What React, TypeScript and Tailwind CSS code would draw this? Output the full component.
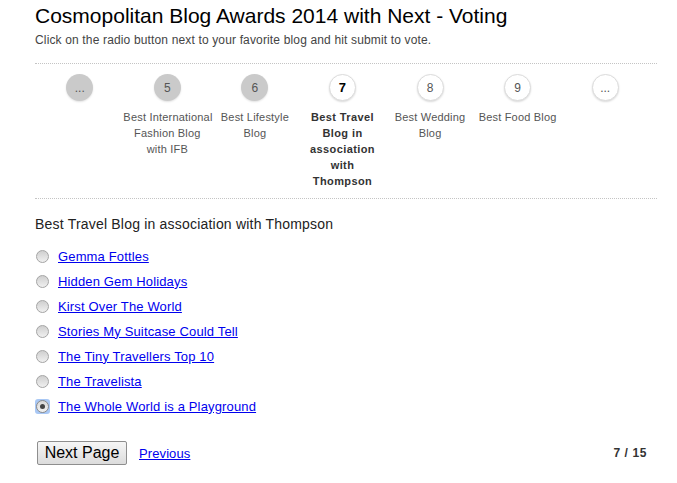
const STEPS = [
  { n: "...", lines: [] as string[], kind: "done" },
  { n: "5", lines: ["Best International", "Fashion Blog", "with IFB"], kind: "done" },
  { n: "6", lines: ["Best Lifestyle", "Blog"], kind: "done" },
  { n: "7", lines: ["Best Travel", "Blog in", "association", "with", "Thompson"], kind: "active" },
  { n: "8", lines: ["Best Wedding", "Blog"], kind: "todo" },
  { n: "9", lines: ["Best Food Blog"], kind: "todo" },
  { n: "...", lines: [] as string[], kind: "todo" },
];

const BLOGS = [
  "Gemma Fottles",
  "Hidden Gem Holidays",
  "Kirst Over The World",
  "Stories My Suitcase Could Tell",
  "The Tiny Travellers Top 10",
  "The Travelista",
  "The Whole World is a Playground",
];

function Radio({ checked }: { checked: boolean }) {
  if (checked) {
    return (
      <span className="flex h-[15px] w-[15px] items-center justify-center rounded-[3px] bg-[#a9c8f5]">
        <span className="flex h-[13px] w-[13px] items-center justify-center rounded-full border border-[#8a8a8a] bg-gradient-to-b from-[#d8d8d8] to-[#f2f2f2]">
          <span className="h-[5px] w-[5px] rounded-full bg-[#444]" />
        </span>
      </span>
    );
  }
  return (
    <span className="flex h-[15px] w-[15px] items-center justify-center">
      <span className="h-[13px] w-[13px] rounded-full border border-[#a4a4a4] bg-gradient-to-b from-[#cfcfcf] to-[#f0f0f0]" />
    </span>
  );
}

export default function App() {
  return (
    <div className="min-h-[483px] w-[677px] bg-white font-['Liberation_Sans',Arial,sans-serif]">
      <div className="w-[622px] pl-[35px] pt-[4px] box-content">
        <h1 className="text-[21px] leading-[24px] text-black">
          Cosmopolitan Blog Awards 2014 with Next - Voting
        </h1>
        <p className="mt-[4px] text-[12px] leading-[16px] tracking-[0.15px] text-[#444]">
          Click on the radio button next to your favorite blog and hit submit to vote.
        </p>

        <div className="mt-[15px] border-t border-dotted border-[#c4c4c4] pt-[10px] pb-[9px]">
          <div className="ml-px grid w-[613px] grid-cols-7">
            {STEPS.map((s, i) => (
              <div key={i} className="flex flex-col items-center">
                <div
                  className={
                    s.kind === "done"
                      ? "flex h-[27px] w-[27px] items-center justify-center rounded-full bg-[#cacaca] text-[12px] text-[#555] shadow-[0_1px_2px_rgba(0,0,0,0.12)]"
                      : s.kind === "active"
                      ? "flex h-[27px] w-[27px] items-center justify-center rounded-full border border-[#dcdcdc] bg-white text-[13px] font-bold text-black shadow-[0_1px_2px_rgba(0,0,0,0.15)]"
                      : "flex h-[27px] w-[27px] items-center justify-center rounded-full border border-[#dcdcdc] bg-white text-[12px] text-[#555] shadow-[0_1px_2px_rgba(0,0,0,0.15)]"
                  }
                >
                  {s.n}
                </div>
                {s.lines.length > 0 && (
                  <div
                    className={
                      s.kind === "active"
                        ? "mt-[8px] w-[88px] text-center text-[11px] font-bold leading-[16px] tracking-[0.4px] whitespace-nowrap text-[#333]"
                        : "mt-[8px] w-[88px] text-center text-[11px] leading-[16px] tracking-[0.2px] whitespace-nowrap text-[#555]"
                    }
                  >
                    {s.lines.map((l) => (
                      <div key={l}>{l}</div>
                    ))}
                  </div>
                )}
              </div>
            ))}
          </div>
        </div>

        <div className="border-t border-dotted border-[#c4c4c4] pt-[17px]">
          <h2 className="text-[14px] leading-[16px] tracking-[0.2px] text-[#222]">
            Best Travel Blog in association with Thompson
          </h2>
          <ul className="mt-[12px]">
            {BLOGS.map((b, i) => (
              <li key={b} className="flex h-[25px] items-center gap-[8px]">
                <Radio checked={i === BLOGS.length - 1} />
                <a href="#" className="text-[13px] tracking-[0.15px] text-[#0000ee] underline">
                  {b}
                </a>
              </li>
            ))}
          </ul>

          <div className="mt-[22px] flex items-center justify-between pr-[10px]">
            <div className="flex items-center gap-[12px]">
              <button className="ml-[2px] h-[24px] w-[90px] rounded-[2px] border border-[#8e8e8e] bg-gradient-to-b from-[#f6f6f6] to-[#dcdcdc] text-[16px] leading-[20px] text-black">
                Next Page
              </button>
              <a href="#" className="mt-[2px] text-[13px] tracking-[0.1px] text-[#0000ee] underline">
                Previous
              </a>
            </div>
            <span className="text-[12px] font-bold tracking-[0.6px] text-[#333]">7 / 15</span>
          </div>
        </div>
      </div>
    </div>
  );
}
